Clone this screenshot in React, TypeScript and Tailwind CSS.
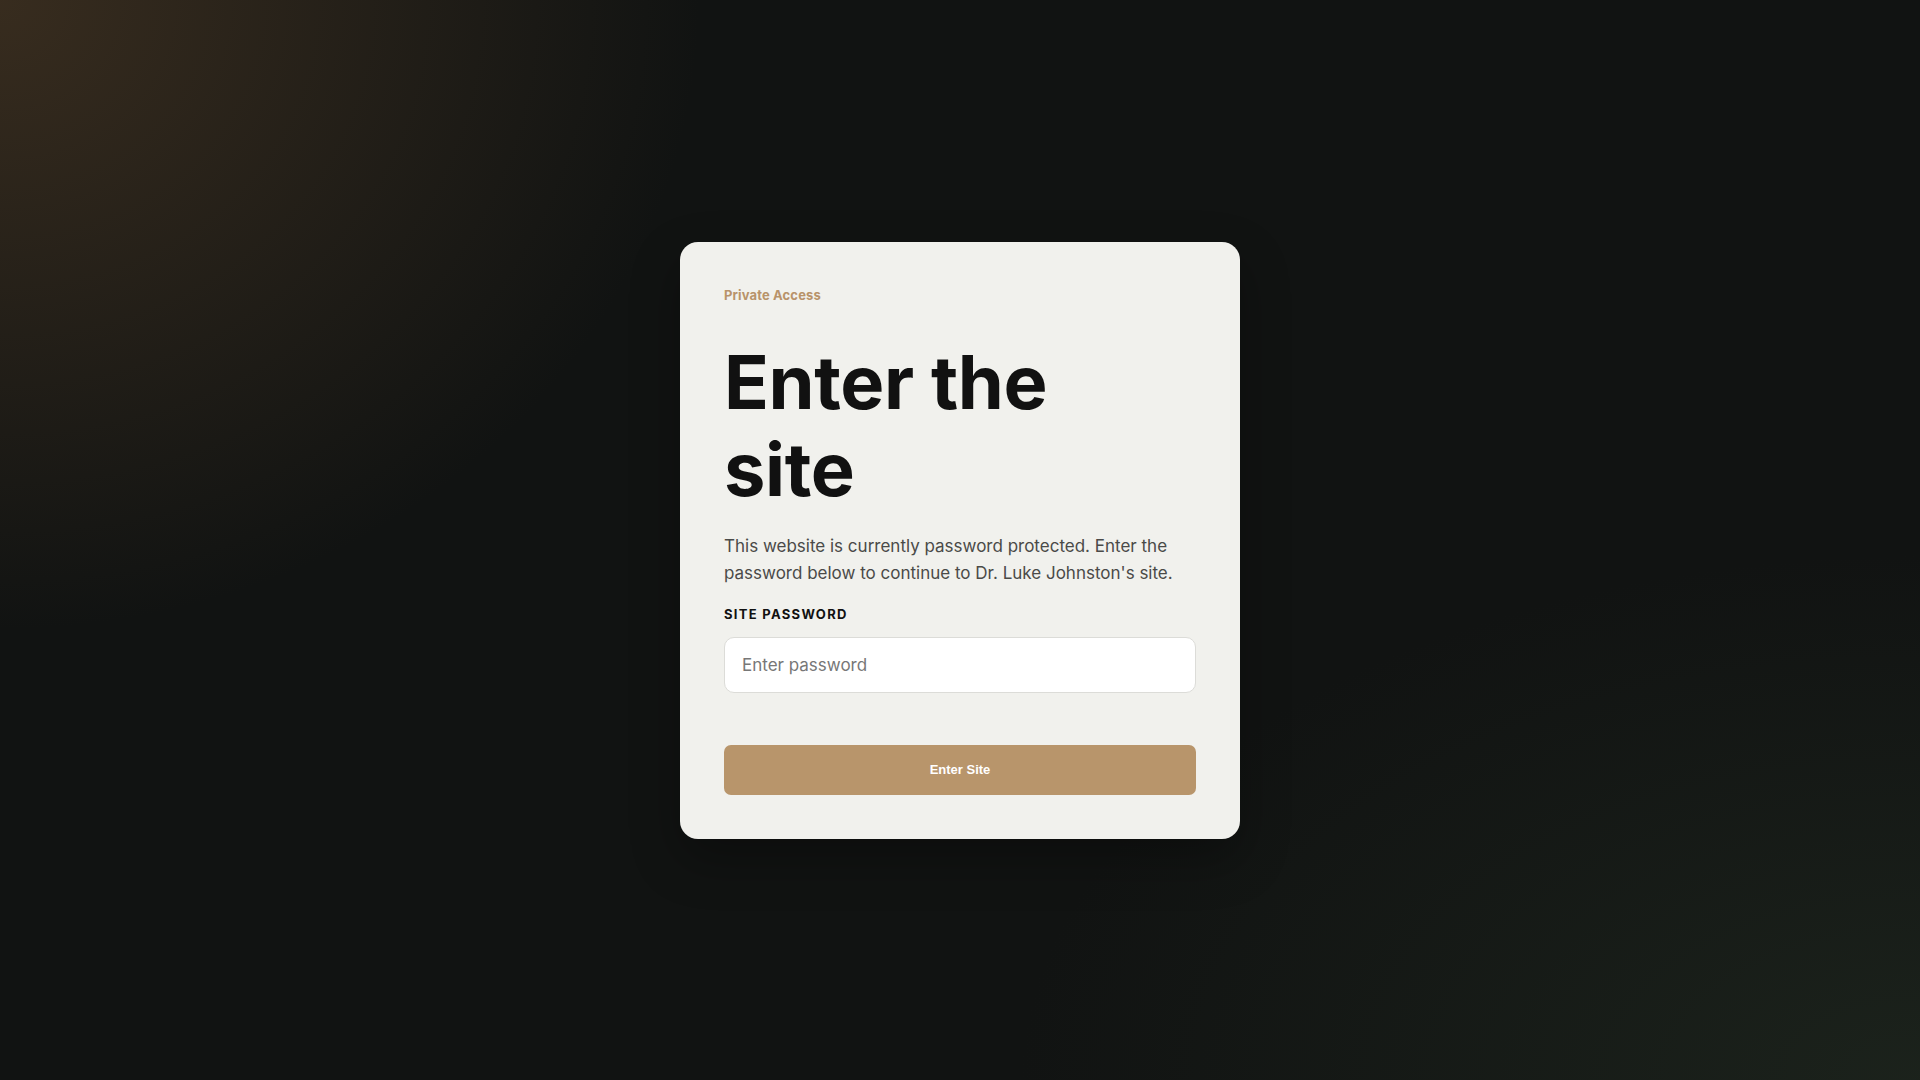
export default function App() {
  return (
    <div className="relative min-h-screen w-full overflow-hidden bg-[#111312] font-['Inter','Noto_Sans',sans-serif]">
      {/* background glows */}
      <div className="pointer-events-none absolute inset-0 bg-[radial-gradient(ellipse_1000px_900px_at_0%_0%,rgba(72,55,36,0.7),rgba(17,19,18,0)_70%)]" />
      <div className="pointer-events-none absolute inset-0 bg-[radial-gradient(ellipse_1200px_700px_at_100%_100%,rgba(30,38,30,0.8),rgba(17,19,18,0)_75%)]" />

      <div className="relative flex min-h-screen items-center justify-center">
        <div className="w-[560px] rounded-[18px] bg-[#f1f1ed] px-11 pt-[43px] pb-11 shadow-[0_20px_50px_rgba(0,0,0,0.3)]">
          <p className="text-[13px] leading-5 font-bold tracking-[0.01em] text-[#b8936a]">
            Private Access
          </p>

          <h1 className="mt-[34px] text-[74px] leading-[87px] font-bold tracking-[-0.005em] text-[#111111]">
            Enter the
            <br />
            site
          </h1>

          <p className="mt-[20px] text-[17px] leading-[27px] text-[#4a4a48]">
            This website is currently password protected. Enter the password
            below to continue to Dr. Luke Johnston's site.
          </p>

          <label className="mt-[18px] block text-[13px] leading-[18px] font-bold tracking-[0.1em] text-[#111111]">
            SITE PASSWORD
          </label>

          <input
            type="password"
            placeholder="Enter password"
            className="mt-[14px] block h-[56px] w-full rounded-[10px] border border-[#dcdcd8] bg-white px-[17px] text-[17px] text-[#222] placeholder:text-[#777] outline-none"
          />

          <button className="mt-[52px] block h-[50px] w-full rounded-[7px] bg-[#b8956b] font-['Liberation_Sans',Arial,sans-serif] text-[13px] font-bold text-white">
            Enter Site
          </button>
        </div>
      </div>
    </div>
  );
}
